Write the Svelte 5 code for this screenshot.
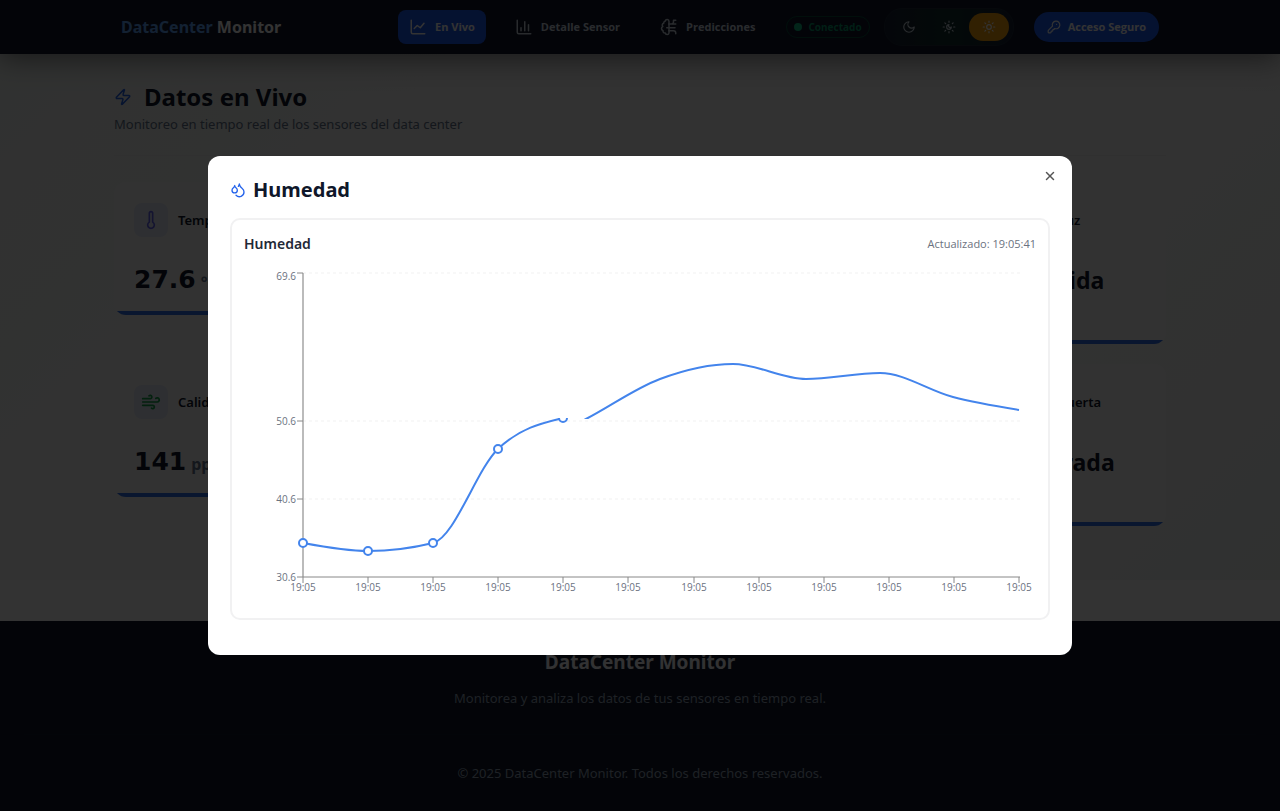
<script>
  const icons = {
    line: ['M3 3v16a2 2 0 0 0 2 2h16', 'm7 14 4-4 4 3 5-6'],
    bars: ['M3 3v16a2 2 0 0 0 2 2h16', 'M8 17v-4', 'M13 17V5', 'M18 17V9'],
    brain: [
      'M12 8V4.5a2.5 2.5 0 0 0-4.96-.46 2.5 2.5 0 0 0-1.98 3 2.5 2.5 0 0 0-1.32 4.24 3 3 0 0 0 .34 5.58 2.5 2.5 0 0 0 2.96 3.08A2.5 2.5 0 0 0 12 20v-3',
      'M12 8h3a3 3 0 0 0 3-3V3h3',
      'M9 13h11',
      'M12 17h6a3 3 0 0 1 3 3v1',
      'M12 8v9',
      'M17 8h4'
    ],
    moon: ['M12 3a6 6 0 0 0 9 9 9 9 0 1 1-9-9Z'],
    auto: ['M12 8a2 2 0 1 0 4 4 4 4 0 1 1-4-4', 'M12 2v2M12 20v2M4.9 4.9l1.4 1.4M17.7 17.7l1.4 1.4M2 12h2M20 12h2M6.3 17.7l-1.4 1.4M19.1 4.9l-1.4 1.4'],
    sun: ['M16 12a4 4 0 1 1-8 0 4 4 0 0 1 8 0', 'M12 2v2M12 20v2M4.9 4.9l1.4 1.4M17.7 17.7l1.4 1.4M2 12h2M20 12h2M6.3 17.7l-1.4 1.4M19.1 4.9l-1.4 1.4'],
    key: ['M2.6 17.4A2 2 0 0 0 2 18.8V21a1 1 0 0 0 1 1h3a1 1 0 0 0 1-1v-1a1 1 0 0 1 1-1h1a1 1 0 0 0 1-1v-1a1 1 0 0 1 1-1h.2a2 2 0 0 0 1.4-.6l.8-.8a6.5 6.5 0 1 0-4-4Z', 'M16.5 7.5h.01'],
    zap: ['M4 14a1 1 0 0 1-.78-1.63l9.9-10.2a.5.5 0 0 1 .86.46l-1.92 6.02A1 1 0 0 0 13 10h7a1 1 0 0 1 .78 1.63l-9.9 10.2a.5.5 0 0 1-.86-.46l1.92-6.02A1 1 0 0 0 11 14z'],
    temp: ['M14 4v10.54a4 4 0 1 1-4 0V4a2 2 0 0 1 4 0Z'],
    wind: ['M17.7 7.7a2.5 2.5 0 1 1 1.8 4.3H2', 'M9.6 4.6A2 2 0 1 1 11 8H2', 'M12.6 19.4A2 2 0 1 0 14 16H2'],
    drops: [
      'M7 16.3c2.2 0 4-1.83 4-4.05 0-1.16-.57-2.26-1.71-3.19S7.29 6.75 7 5.3c-.29 1.45-1.14 2.84-2.29 3.76S3 11.1 3 12.25c0 2.22 1.8 4.05 4 4.05z',
      'M12.56 6.6A10.97 10.97 0 0 0 14 3.02c.5 2.5 2 4.9 4 6.5s3 3.5 3 5.5a6.98 6.98 0 0 1-11.91 4.97'
    ],
    close: ['M5 5l14 14', 'M19 5 5 19']
  };

  let theme = $state('sun');
  const themes = [
    { id: 'moon', label: 'Oscuro' },
    { id: 'auto', label: 'Auto' },
    { id: 'sun', label: 'Claro' }
  ];

  // Monotone cubic interpolation through [x, y] points.
  function curve(pts) {
    const n = pts.length;
    const s = pts.slice(1).map((p, i) => (p[1] - pts[i][1]) / (p[0] - pts[i][0]));
    const t = pts.map((p, i) => {
      if (i === 0 || i === n - 1) return 0;
      const h0 = p[0] - pts[i - 1][0];
      const h1 = pts[i + 1][0] - p[0];
      const m = (s[i - 1] * h1 + s[i] * h0) / (h0 + h1);
      return (Math.sign(s[i - 1]) + Math.sign(s[i])) * Math.min(Math.abs(s[i - 1]), Math.abs(s[i]), 0.5 * Math.abs(m));
    });
    t[0] = (3 * s[0] - t[1]) / 2;
    t[n - 1] = (3 * s[n - 2] - t[n - 2]) / 2;
    let d = `M${pts[0]}`;
    for (let i = 1; i < n; i++) {
      const dx = (pts[i][0] - pts[i - 1][0]) / 3;
      d += `C${pts[i - 1][0] + dx},${pts[i - 1][1] + dx * t[i - 1]} ${pts[i][0] - dx},${pts[i][1] - dx * t[i]} ${pts[i]}`;
    }
    return d;
  }

  const early = [[59, 281], [124, 289], [189, 281], [254, 187], [319, 156]];
  const late = [[269, 193], [342, 157], [416, 117], [489, 102], [562, 117], [636, 111], [709, 135], [775, 148]];
  const yTicks = [
    { y: 11, label: '69.6', text: 18 },
    { y: 159, label: '50.6', text: 163 },
    { y: 237, label: '40.6', text: 241 },
    { y: 315, label: '30.6', text: 319 }
  ];
  const xTicks = Array.from({ length: 12 }, (_, i) => Math.round(59 + (i * 716) / 11));
</script>

{#snippet icon(name)}
  <svg class="icon" viewBox="0 0 24 24" aria-hidden="true">
    {#each icons[name] as d}<path {d} />{/each}
  </svg>
{/snippet}

<div class="page">
  <header>
    <div class="bar">
      <a class="brand" href="#inicio"><span>DataCenter</span> Monitor</a>
      <nav>
        <a class="active" href="#vivo">{@render icon('line')}En Vivo</a>
        <a href="#detalle">{@render icon('bars')}Detalle Sensor</a>
        <a href="#predicciones">{@render icon('brain')}Predicciones</a>
      </nav>
      <div class="status"><i></i>Conectado</div>
      <div class="themes">
        {#each themes as t}
          <button class:on={theme === t.id} aria-label={t.label} onclick={() => (theme = t.id)}>{@render icon(t.id)}</button>
        {/each}
      </div>
      <button class="login">{@render icon('key')}Acceso Seguro</button>
    </div>
  </header>

  <main>
    <div class="wrap">
      <div class="heading">
        <h1>{@render icon('zap')}Datos en Vivo</h1>
        <p>Monitoreo en tiempo real de los sensores del data center</p>
      </div>
      <div class="cards">
        <article class="card">
          <h2><span class="tile violet">{@render icon('temp')}</span>Temperatura</h2>
          <p class="value">27.6<small>°<b>C</b></small></p>
        </article>
        <article class="card state">
          <h2>Sensor de Luz</h2>
          <p class="word">Luz Encendida</p>
        </article>
        <article class="card">
          <h2><span class="tile green">{@render icon('wind')}</span>Calidad de Aire</h2>
          <p class="value">141<small>ppm</small></p>
        </article>
        <article class="card state">
          <h2>Sensor de Puerta</h2>
          <p class="word">Puerta Cerrada</p>
        </article>
      </div>
    </div>
  </main>

  <footer>
    <h3>DataCenter Monitor</h3>
    <p>Monitorea y analiza los datos de tus sensores en tiempo real.</p>
    <p class="copy">© 2025 DataCenter Monitor. Todos los derechos reservados.</p>
  </footer>
</div>

<div class="overlay">
  <div class="modal" role="dialog" aria-modal="true" aria-labelledby="modal-title">
    <button class="close" aria-label="Cerrar">{@render icon('close')}</button>
    <h2 id="modal-title">{@render icon('drops')}Humedad</h2>
    <section class="chart">
      <div class="chart-head">
        <h3>Humedad</h3>
        <span>Actualizado: 19:05:41</span>
      </div>
      <svg class="plot" viewBox="0 0 792 344" role="img" aria-label="Humedad">
        <defs>
          <clipPath id="below"><rect x="0" y="156" width="792" height="188" /></clipPath>
          <clipPath id="above"><rect x="0" y="0" width="792" height="157" /></clipPath>
        </defs>
        <g class="grid">
          {#each yTicks.slice(0, 3) as t}<line x1="59" x2="776" y1={t.y} y2={t.y} />{/each}
        </g>
        <path class="axis y" d="M59 11V315" />
        <path class="axis" d="M59 315H776" />
        {#each yTicks as t}
          <path class="axis" d="M53 {t.y}h6" />
          <text x="52" y={t.text} text-anchor="end">{t.label}</text>
        {/each}
        {#each xTicks as x}
          <path class="axis" d="M{x} 315v6" />
          <text {x} y="329" text-anchor="middle">19:05</text>
        {/each}
        <g class="series" clip-path="url(#below)">
          <path d={curve(early)} />
          {#each early as p}<circle cx={p[0]} cy={p[1]} r="4" />{/each}
        </g>
        <g class="series" clip-path="url(#above)"><path d={curve(late)} /></g>
      </svg>
    </section>
  </div>
</div>

<style>
  :global(body) {
    margin: 0;
    background: #fff;
    font-family: 'Noto Sans', 'Open Sans', sans-serif;
    color: #0f172a;
  }
  :global(*) { box-sizing: border-box; }
  h1, h2, h3, p { margin: 0; }
  button { font: inherit; border: 0; background: none; padding: 0; cursor: pointer; }
  a { color: inherit; text-decoration: none; }
  .icon {
    width: 18px;
    height: 18px;
    flex: none;
    fill: none;
    stroke: currentColor;
    stroke-width: 2;
    stroke-linecap: round;
    stroke-linejoin: round;
  }

  .page { display: flex; flex-direction: column; min-height: 100vh; }
  header {
    padding-bottom: 1px;
    background: #0f172a;
    box-shadow: 0 4px 28px rgba(0, 0, 0, 0.5);
    position: relative;
    z-index: 1;
  }
  .bar {
    display: flex;
    align-items: center;
    gap: 14px;
    height: 53px;
    max-width: 1038px;
    margin: 0 auto;
    color: #fff;
    font-size: 11px;
    font-weight: 700;
  }
  .brand { font-size: 16px; margin-right: auto; }
  .brand span { color: #60a5fa; }
  nav { display: flex; gap: 18px; margin-right: 6px; font-family: 'Open Sans', sans-serif; }
  nav a {
    display: flex;
    align-items: center;
    gap: 8px;
    height: 34px;
    padding: 0 11px;
    border-radius: 8px;
    color: #cbd5e1;
  }
  nav a.active { background: #1d5af0; color: #fff; }
  .status {
    display: flex;
    align-items: center;
    gap: 6px;
    height: 22px;
    padding: 0 7px;
    border: 1px solid #064e3b;
    border-radius: 12px;
    color: #059669;
    font-size: 10px;
  }
  .status i { width: 8px; height: 8px; border-radius: 50%; background: #10b981; }
  .themes {
    display: flex;
    padding: 4px;
    border: 1px solid #1e293b;
    border-radius: 18px;
    background: linear-gradient(90deg, #172033, #11302f, #172033);
  }
  .themes button {
    display: grid;
    place-items: center;
    width: 40px;
    height: 28px;
    border-radius: 14px;
    color: #cbd5e1;
  }
  .themes button.on { background: #f59e0b; color: #fff; }
  .themes .icon, .login .icon { width: 14px; height: 14px; }
  .login {
    display: flex;
    align-items: center;
    gap: 7px;
    height: 30px;
    margin-left: 6px;
    padding: 0 13px;
    border-radius: 15px;
    background: #1d5af0;
    color: #fff;
    font-family: 'Open Sans', sans-serif;
  }

  main {
    padding: 28px 24px 54px;
    background: linear-gradient(135deg, #f0f5f2 0, #f8f8f8 25%, #f8f8f8 70%, #eff4f1 100%);
    margin-bottom: 41px;
  }
  .wrap { max-width: 1052px; margin: 0 auto; }
  .heading { padding-bottom: 19px; border-bottom: 1px solid #eee; }
  h1 {
    display: flex;
    align-items: center;
    gap: 12px;
    font-size: 24px;
    line-height: 30px;
  }
  h1 .icon { color: #2563eb; }
  .heading p { font-size: 13px; line-height: 24px; color: #64748b; }
  .cards {
    display: grid;
    grid-template-columns: repeat(4, 1fr);
    gap: 20px 24px;
    align-items: start;
    margin-top: 26px;
  }
  .card {
    grid-column: 1;
    position: relative;
    overflow: hidden;
    padding: 20px;
    border-radius: 12px;
    background: #fbfbfb;
    height: 133px;
  }
  .card::after {
    content: '';
    position: absolute;
    left: 0;
    right: 0;
    bottom: 0;
    height: 4px;
    background: #2f6fe8;
  }
  .card.state { grid-column: 4; height: 162px; }
  .card h2 {
    display: flex;
    align-items: center;
    gap: 10px;
    height: 36px;
    font-size: 13px;
    font-weight: 600;
    white-space: nowrap;
  }
  .card.state h2 { padding-left: 52px; }
  .tile {
    display: grid;
    place-items: center;
    width: 34px;
    height: 34px;
    border-radius: 8px;
    background: #e6ebf8;
    flex: none;
  }
  .tile .icon { width: 20px; height: 20px; }
  .violet { color: #6366f1; }
  .green { color: #16a34a; }
  .value {
    margin-top: 24px;
    font-family: 'DejaVu Sans', sans-serif;
    font-weight: 700;
    font-size: 25px;
    line-height: 36px;
  }
  .value small { margin-left: 5px; font-family: 'Noto Sans', sans-serif; font-size: 16px; color: #64748b; }
  .value b { color: #f97316; }
  .word { margin-top: 24px; font-size: 23px; line-height: 36px; font-weight: 700; white-space: nowrap; }

  footer {
    flex: 1;
    padding: 26px 24px 24px;
    background: #0f172a;
    text-align: center;
    color: #94a3b8;
    font-size: 13px;
    line-height: 20px;
  }
  footer h3 { font-size: 19px; line-height: 30px; color: #f8fafc; }
  footer p { margin-top: 11px; }
  footer .copy { margin-top: 26px; padding-top: 28px; border-top: 1px solid #121b2f; }

  .overlay {
    position: fixed;
    inset: 0;
    z-index: 10;
    display: flex;
    align-items: center;
    justify-content: center;
    padding: 16px;
    background: rgba(0, 0, 0, 0.8);
  }
  .modal {
    position: relative;
    width: 100%;
    max-width: 864px;
    padding: 22px 22px 35px;
    border-radius: 12px;
    background: #fff;
  }
  .modal h2 {
    display: flex;
    align-items: center;
    gap: 7px;
    margin-bottom: 16px;
    font-size: 20px;
    line-height: 24px;
  }
  .modal h2 .icon { width: 16px; height: 16px; color: #2563eb; }
  .close {
    position: absolute;
    top: 12px;
    right: 14px;
    display: grid;
    place-items: center;
    width: 16px;
    height: 16px;
    color: #555;
  }
  .close .icon { width: 12px; height: 12px; stroke-width: 3; }
  .chart { padding: 12px; border: 2px solid #f1f1f2; border-radius: 10px; background: #fff; }
  .chart-head {
    display: flex;
    align-items: center;
    justify-content: space-between;
    height: 22px;
    margin-bottom: 8px;
  }
  .chart-head h3 { font-size: 14px; font-weight: 600; color: #1f2937; }
  .chart-head span { font-family: 'Open Sans', sans-serif; font-size: 11px; color: #6b7280; }
  .plot { display: block; width: 100%; height: auto; }
  .plot text { font-family: 'Open Sans', sans-serif; font-size: 10px; fill: #6b7280; }
  .grid line { stroke: #f1f1f1; stroke-dasharray: 3 3; }
  .axis { fill: none; stroke: #888; }
  .axis.y { stroke: #bbb; stroke-width: 2; }
  .series path { fill: none; stroke: #4384ec; stroke-width: 2; }
  .series circle { fill: #fff; stroke: #4384ec; stroke-width: 2; }
</style>
